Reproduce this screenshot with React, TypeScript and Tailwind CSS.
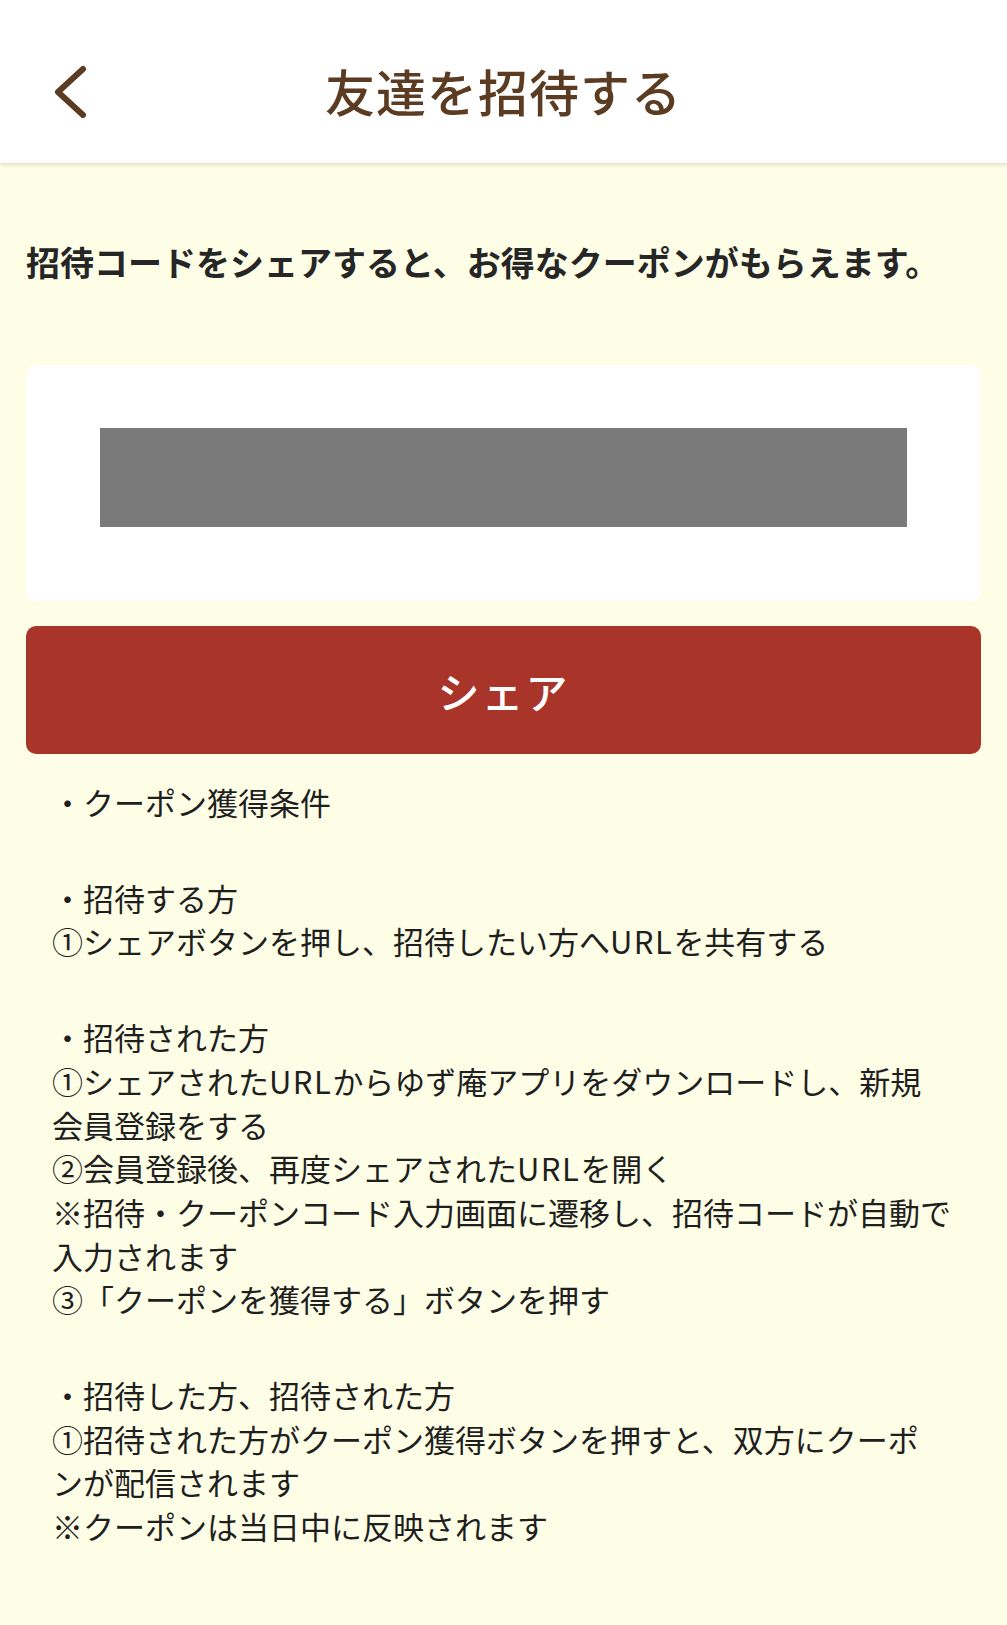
const font = { fontFamily: '"Noto Sans CJK JP", "Noto Sans", sans-serif' };

function BackIcon() {
  return (
    <svg width="34" height="54" viewBox="0 0 34 54" fill="none">
      <polyline
        points="29,4 4,27 29,50"
        stroke="currentColor"
        strokeWidth="6"
        strokeLinecap="round"
        strokeLinejoin="round"
      />
    </svg>
  );
}

export default function App() {
  return (
    <div className="min-h-[1625px] w-full bg-[#fefee6]" style={font}>
      {/* Header */}
      <header className="relative flex h-[163px] items-center justify-center bg-white shadow-[0_2px_4px_rgba(0,0,0,0.12)]">
        <button className="absolute left-[54px] top-[65px] text-[#5b3c22]">
          <BackIcon />
        </button>
        <h1 className="mt-[18px] text-[50px] font-medium tracking-[1px] text-[#5b3c22]">
          友達を招待する
        </h1>
      </header>

      <main className="px-[26px]">
        <p className="mt-[75px] text-[34px] font-semibold leading-[48px] text-[#262626]">
          招待コードをシェアすると、お得なクーポンがもらえます。
        </p>

        {/* Invite code card */}
        <div className="mt-[79px] rounded-[10px] bg-white px-[74px] pt-[63px] pb-[74px]">
          <div className="h-[99px] bg-[#7a7a7a]" />
        </div>

        <button className="mt-[25px] flex h-[128px] w-full items-center justify-center rounded-[10px] bg-[#a9342a] text-[42px] font-medium tracking-[2px] text-white">
          シェア
        </button>

        {/* Conditions */}
        <div className="mt-[26px] flex flex-col gap-[52px] pl-[26px] pr-[12px] text-[31px] leading-[43.7px] text-[#1f1f1f]">
          <p>・クーポン獲得条件</p>
          <p>
            ・招待する方
            <br />
            ①シェアボタンを押し、招待したい方へ<span className="tracking-[1.5px]">URL</span>を共有する
          </p>
          <p>
            ・招待された方
            <br />
            ①シェアされた<span className="tracking-[1.5px]">URL</span>からゆず庵アプリをダウンロードし、新規
            <br />
            会員登録をする
            <br />
            ②会員登録後、再度シェアされた<span className="tracking-[1.5px]">URL</span>を開く
            <br />
            ※招待・クーポンコード入力画面に遷移し、招待コードが自動で
            <br />
            入力されます
            <br />
            ③「クーポンを獲得する」ボタンを押す
          </p>
          <p>
            ・招待した方、招待された方
            <br />
            ①招待された方がクーポン獲得ボタンを押すと、双方にクーポ
            <br />
            ンが配信されます
            <br />
            ※クーポンは当日中に反映されます
          </p>
        </div>
      </main>
    </div>
  );
}
